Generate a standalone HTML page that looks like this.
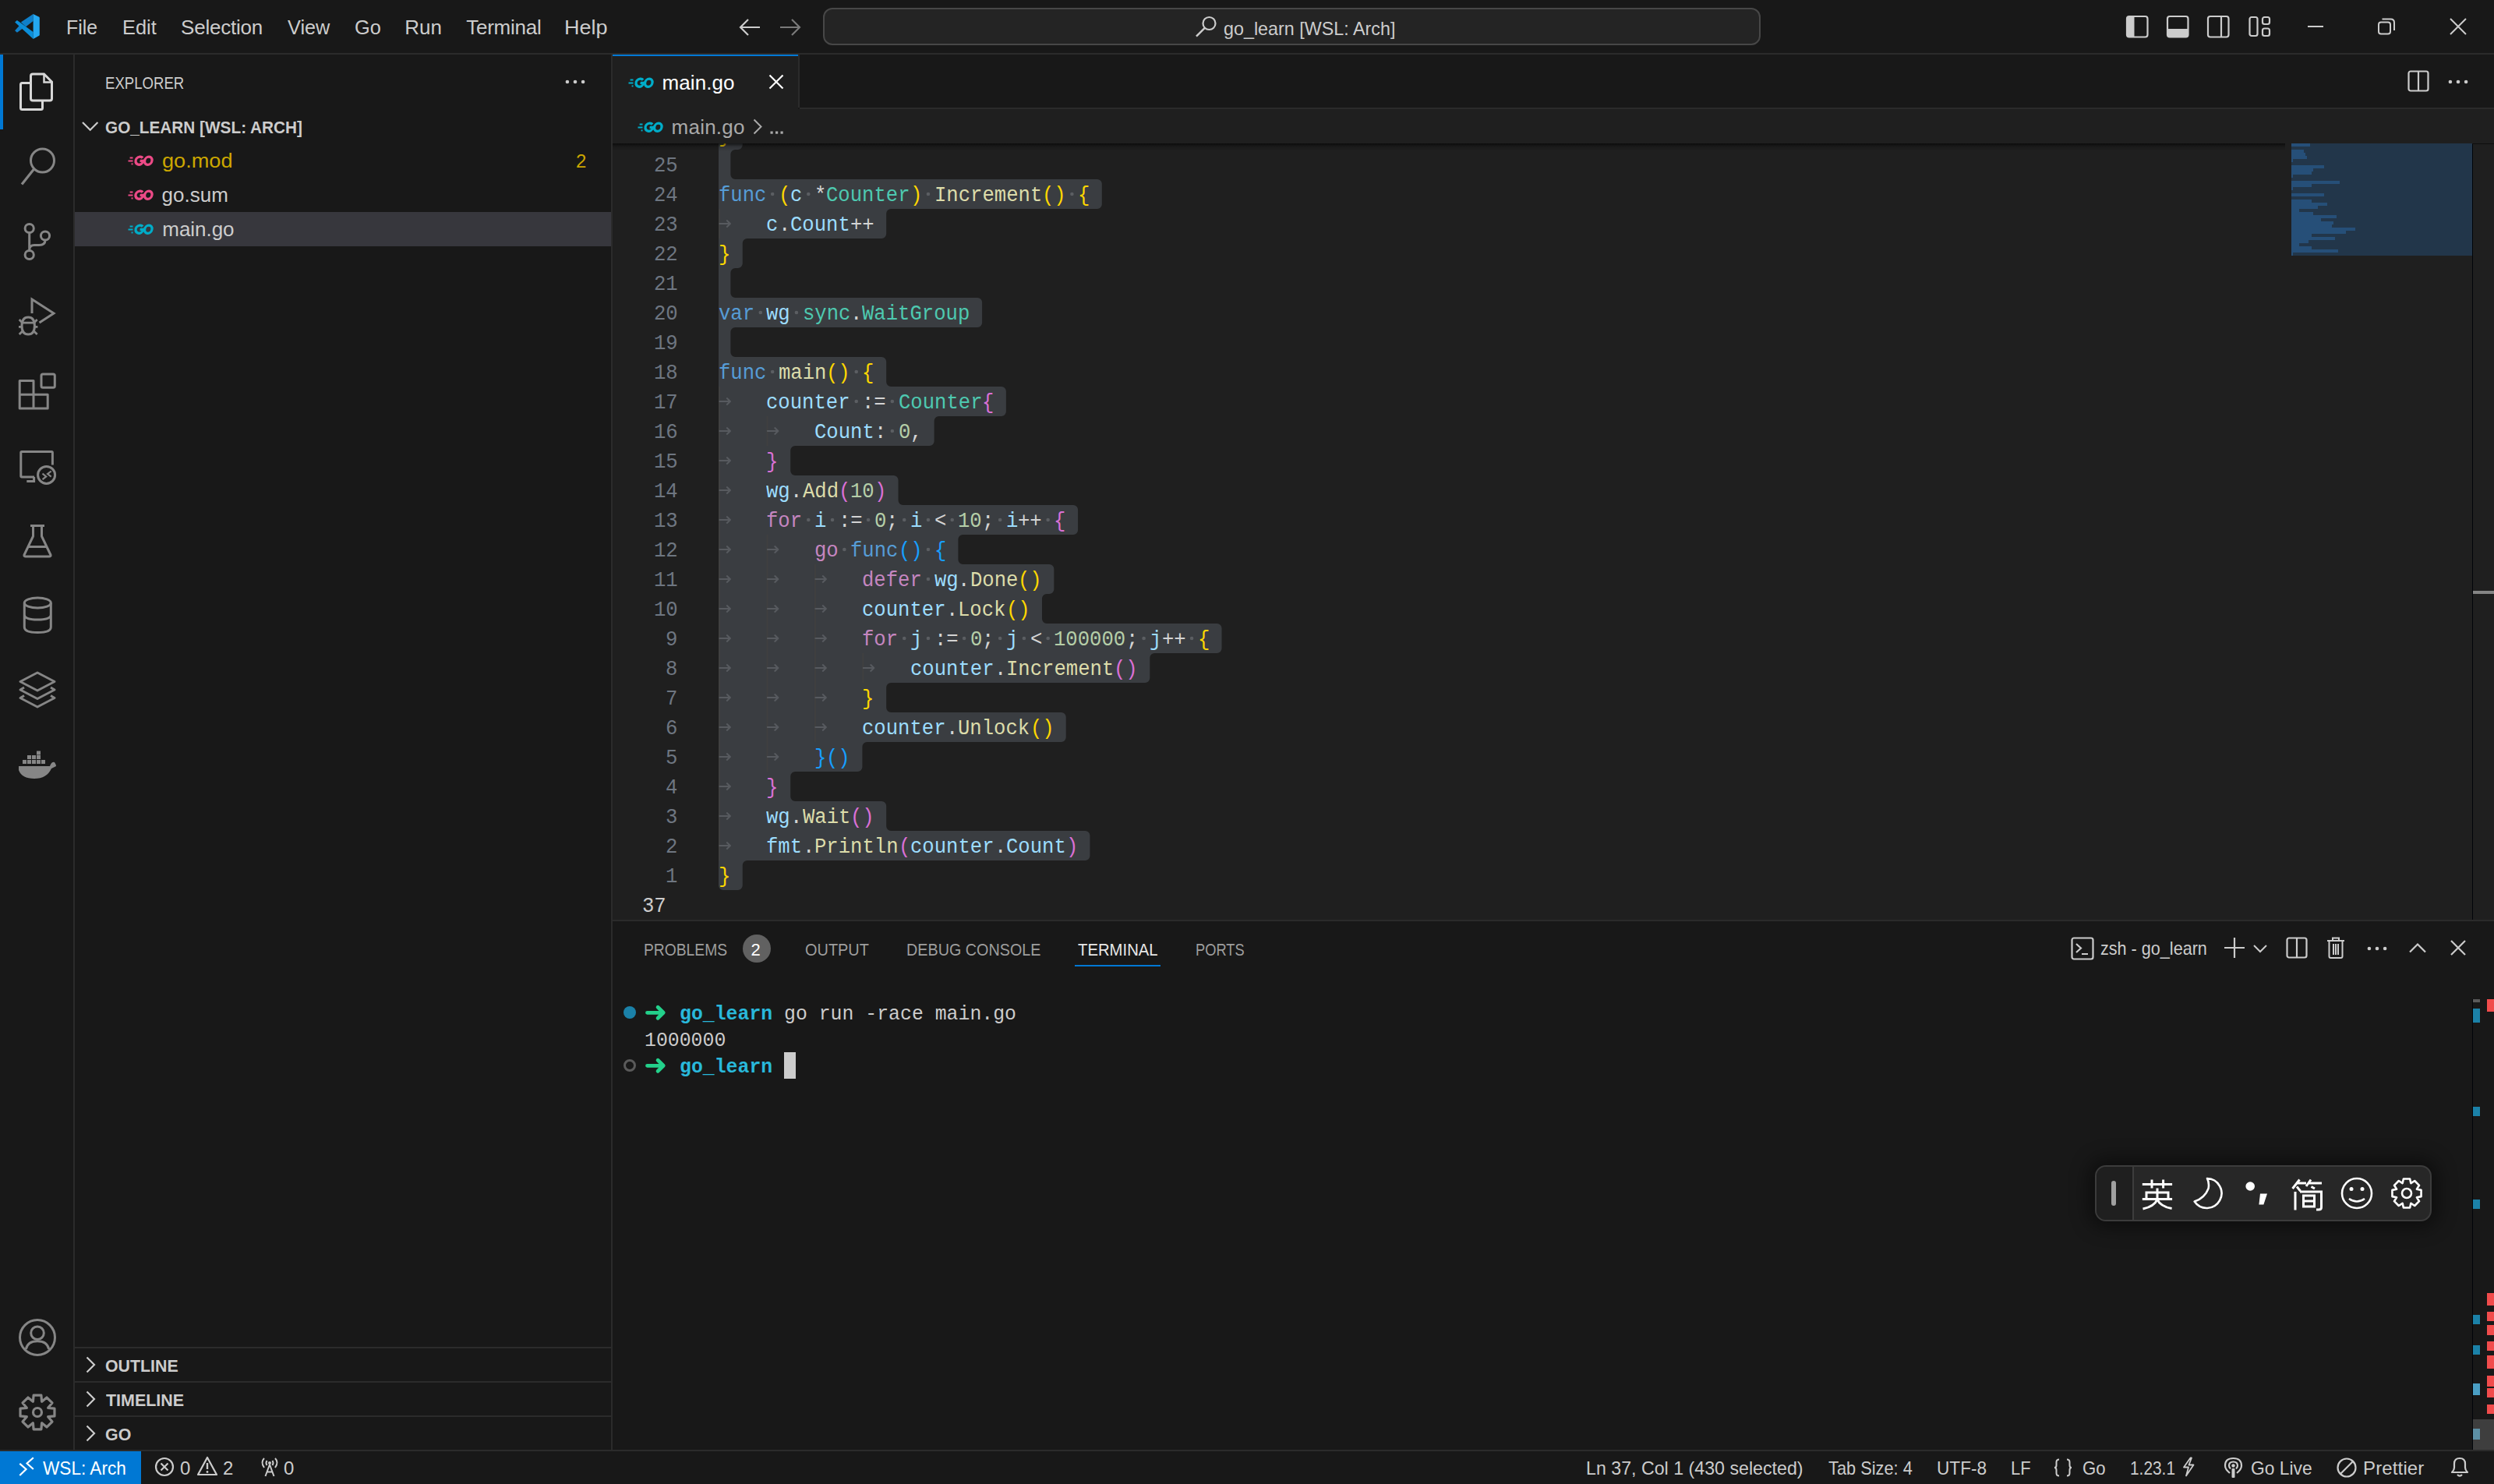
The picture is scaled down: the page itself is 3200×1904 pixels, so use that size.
<!DOCTYPE html>
<html><head><meta charset="utf-8"><title>VS Code</title>
<style>
html,body{margin:0;padding:0;}
body{width:3200px;height:1904px;overflow:hidden;position:relative;background:#181818;font-family:'Liberation Sans',sans-serif;}
.r{position:absolute;}
.s{position:absolute;overflow:hidden;}
.t{position:absolute;white-space:pre;}
.c{position:absolute;white-space:pre;font-family:'Liberation Mono',monospace;font-size:27px;line-height:27px;transform:scaleX(0.9488);transform-origin:0 0;}
</style></head><body>
<div class="r" style="left:0px;top:0px;width:3200px;height:68px;background:#181818;"></div><div class="r" style="left:0px;top:68px;width:3200px;height:2px;background:#2b2b2b;"></div><svg class="s" style="left:14px;top:12px;" width="42" height="42" viewBox="14 12 42 42" fill="none">
<path d="M42.6 17.9 L42.6 27 L33.2 34.2 L26.8 28.6 Z" fill="#0f7fc9"/>
<path d="M19.1 39.2 L21.9 41.8 L29.2 36.4 L25.2 32.5 Z" fill="#0f7fc9"/>
<path d="M19.1 28.6 L21.9 26.1 L42.6 41 L42.6 49.9 Z" fill="#0b8ed9"/>
<path d="M42.6 17.9 L50.2 21.8 Q50.8 22.3 50.8 23.2 V44.5 Q50.8 45.3 50.2 45.7 L42.6 49.9 Z" fill="#24a8f2"/>
</svg><svg class="s" style="left:946px;top:20px;" width="32" height="30" viewBox="0 0 32 30" fill="none"><path d="M4 15 H29 M14 5 L4 15 L14 25" stroke="#cccccc" stroke-width="2.2"/></svg><svg class="s" style="left:998px;top:20px;" width="32" height="30" viewBox="0 0 32 30" fill="none"><path d="M3 15 H28 M18 5 L28 15 L18 25" stroke="#7a7a7a" stroke-width="2.2"/></svg><div class="r" style="left:1056px;top:10px;width:1203px;height:48px;background:#242424;border:2px solid #474747;box-sizing:border-box;border-radius:12px;"></div><svg class="s" style="left:1532px;top:18px;" width="32" height="32" viewBox="0 0 32 32" fill="none"><circle cx="19.5" cy="12" r="8" stroke="#cccccc" stroke-width="2.2"/><path d="M13.8 17.8 L3 28.6" stroke="#cccccc" stroke-width="2.4"/></svg><svg class="s" style="left:2726px;top:18px;" width="32" height="32" viewBox="0 0 32 32" fill="none"><rect x="3" y="3" width="26.5" height="26.5" rx="3" stroke="#cccccc" stroke-width="2.2"/><path d="M3 6 Q3 3 6 3 H12.5 V29.5 H6 Q3 29.5 3 26.5 Z" fill="#cccccc"/></svg><svg class="s" style="left:2778px;top:18px;" width="32" height="32" viewBox="0 0 32 32" fill="none"><rect x="3" y="3" width="26.5" height="26.5" rx="3" stroke="#cccccc" stroke-width="2.2"/><path d="M3 19 H29.5 V26.5 Q29.5 29.5 26.5 29.5 H6 Q3 29.5 3 26.5 Z" fill="#cccccc"/></svg><svg class="s" style="left:2830px;top:18px;" width="32" height="32" viewBox="0 0 32 32" fill="none"><rect x="3" y="3" width="26.5" height="26.5" rx="3" stroke="#cccccc" stroke-width="2.2"/><path d="M20 3 V29.5" stroke="#cccccc" stroke-width="2.2"/></svg><svg class="s" style="left:2884px;top:18px;" width="32" height="32" viewBox="0 0 32 32" fill="none"><rect x="2.5" y="4" width="10" height="24" rx="2.5" stroke="#cccccc" stroke-width="2.2"/><rect x="19" y="4" width="9" height="9" rx="2.5" stroke="#cccccc" stroke-width="2.2"/><rect x="19" y="18.5" width="9" height="9.5" rx="2.5" stroke="#cccccc" stroke-width="2.2"/></svg><div class="r" style="left:2961px;top:33px;width:20px;height:2px;background:#cccccc;"></div><svg class="s" style="left:3048px;top:20px;" width="28" height="28" viewBox="0 0 28 28" fill="none"><rect x="4" y="8.5" width="15" height="15" rx="3" stroke="#cccccc" stroke-width="2"/><path d="M8.5 4.5 H19.5 Q24 4.5 24 9 V19" stroke="#cccccc" stroke-width="2"/></svg><svg class="s" style="left:3140px;top:20px;" width="28" height="28" viewBox="0 0 28 28" fill="none"><path d="M4 4 L24 24 M24 4 L4 24" stroke="#cccccc" stroke-width="2"/></svg><div class="r" style="left:0px;top:70px;width:94px;height:1790px;background:#181818;"></div><div class="r" style="left:94px;top:70px;width:2px;height:1790px;background:#2b2b2b;"></div><div class="r" style="left:0px;top:70px;width:4px;height:96px;background:#0078d4;"></div><svg class="s" style="left:0px;top:70px;" width="94" height="96" viewBox="0 70 94 96" fill="none"><path d="M39.5 106.5 H28.5 Q26.5 106.5 26.5 108.5 V138.5 Q26.5 140.5 28.5 140.5 H52.5 Q54.5 140.5 54.5 138.5 V129.5" stroke="#d7d7d7" stroke-width="3"/>
<path d="M42 95 H56.5 L66.5 105 V126.5 Q66.5 129 64 129 H42 Q39.5 129 39.5 126.5 V97.5 Q39.5 95 42 95 Z" stroke="#d7d7d7" stroke-width="3"/>
<path d="M56.5 96 V105.5 H66" stroke="#d7d7d7" stroke-width="2.5"/></svg><svg class="s" style="left:0px;top:166px;" width="94" height="96" viewBox="0 166 94 96" fill="none"><circle cx="54.5" cy="206" r="15" stroke="#868686" stroke-width="3"/><path d="M43.5 217 L28 236.5" stroke="#868686" stroke-width="3.2"/></svg><svg class="s" style="left:0px;top:262px;" width="94" height="96" viewBox="0 262 94 96" fill="none"><circle cx="37.7" cy="293" r="5.6" stroke="#868686" stroke-width="3"/>
<circle cx="37.7" cy="327" r="5.6" stroke="#868686" stroke-width="3"/>
<circle cx="58" cy="302.5" r="5.6" stroke="#868686" stroke-width="3"/>
<path d="M37.7 298.6 V321.4 M58 308 Q58 314.5 50 314.5 H44 Q37.7 314.5 37.7 321" stroke="#868686" stroke-width="3"/></svg><svg class="s" style="left:0px;top:358px;" width="94" height="96" viewBox="0 358 94 96" fill="none"><path d="M41 402 V384 L69 402 L50.5 414" stroke="#868686" stroke-width="3" stroke-linejoin="miter"/>
<path d="M28 418 Q28 407 36.2 407 Q44.4 407 44.4 418 Q44.4 429 36.2 429 Q28 429 28 418 Z" stroke="#868686" stroke-width="3"/>
<path d="M28.5 414.2 H44 M24.7 410.1 L28.8 414.2 M47.7 410.1 L43.6 414.2 M24.7 429 L28.8 425 M47.7 429 L43.6 425 M24 419.3 H28 M44.4 419.3 H48.4" stroke="#868686" stroke-width="2.8"/></svg><svg class="s" style="left:0px;top:454px;" width="94" height="96" viewBox="0 454 94 96" fill="none"><path d="M25.2 488.5 H43 V524 H25.2 Z M25.2 506.2 H61.2 V524 H43" stroke="#868686" stroke-width="3" stroke-linejoin="round"/>
<rect x="53" y="480" width="17.3" height="17.3" rx="2" stroke="#868686" stroke-width="3"/></svg><svg class="s" style="left:0px;top:550px;" width="94" height="96" viewBox="0 550 94 96" fill="none"><path d="M44 612 H28 Q26.8 612 26.8 610.8 V580.8 Q26.8 579.6 28 579.6 H66.2 Q67.4 579.6 67.4 580.8 V596.5" stroke="#868686" stroke-width="3"/>
<path d="M34.3 617.4 H43.6 V612" stroke="#868686" stroke-width="3"/>
<circle cx="59.6" cy="609.4" r="11" stroke="#868686" stroke-width="3"/>
<path d="M54.5 607.7 L59.2 611.4 L54.5 615.1 M65.7 604.5 L61 608.1 L65.7 611.7" stroke="#868686" stroke-width="2.2"/></svg><svg class="s" style="left:0px;top:646px;" width="94" height="96" viewBox="0 646 94 96" fill="none"><path d="M39 674.5 H57 M42.5 674.5 V688 L31 712 Q30.5 714 33 714 H63 Q65.5 714 65 712 L53.5 688 V674.5 M35 701.5 H61" stroke="#868686" stroke-width="3" stroke-linejoin="round"/></svg><svg class="s" style="left:0px;top:742px;" width="94" height="96" viewBox="0 742 94 96" fill="none"><ellipse cx="48.3" cy="773.5" rx="17" ry="6.5" stroke="#868686" stroke-width="3"/>
<path d="M31.3 773.5 V804.5 Q31.3 811.5 48.3 811.5 Q65.3 811.5 65.3 804.5 V773.5 M31.3 788.5 Q31.3 795 48.3 795 Q65.3 795 65.3 788.5" stroke="#868686" stroke-width="3"/></svg><svg class="s" style="left:0px;top:838px;" width="94" height="96" viewBox="0 838 94 96" fill="none"><path d="M48 863 L70 874.5 L48 886 L26 874.5 Z" stroke="#868686" stroke-width="3" stroke-linejoin="round"/>
<path d="M31 882 L26 885 L48 896.5 L70 885 L65 882" stroke="#868686" stroke-width="3" stroke-linejoin="round"/>
<path d="M31 892.5 L26 895.5 L48 907 L70 895.5 L65 892.5" stroke="#868686" stroke-width="3" stroke-linejoin="round"/></svg><svg class="s" style="left:0px;top:934px;" width="94" height="96" viewBox="0 934 94 96" fill="none"><path d="M24 983 H64 Q66 977 70 978 Q72 981 72 983 Q68 985 66 986 Q60 999 44 999 Q28 999 24 988 Z" fill="#868686"/>
<rect x="29" y="975" width="5" height="5" fill="#868686"/><rect x="35" y="975" width="5" height="5" fill="#868686"/><rect x="41" y="975" width="5" height="5" fill="#868686"/><rect x="47" y="975" width="5" height="5" fill="#868686"/><rect x="53" y="975" width="5" height="5" fill="#868686"/>
<rect x="35" y="969" width="5" height="5" fill="#868686"/><rect x="41" y="969" width="5" height="5" fill="#868686"/><rect x="47" y="969" width="5" height="5" fill="#868686"/>
<rect x="47" y="963.5" width="5" height="5" fill="#868686"/></svg><svg class="s" style="left:0px;top:1668px;" width="94" height="96" viewBox="0 1668 94 96" fill="none"><circle cx="48" cy="1716" r="22.5" stroke="#868686" stroke-width="3"/>
<circle cx="48" cy="1710.3" r="8.3" stroke="#868686" stroke-width="3"/>
<path d="M33.3 1731 Q35.5 1720.8 48 1720.8 Q60.5 1720.8 62.7 1731" stroke="#868686" stroke-width="3"/></svg><svg class="s" style="left:0px;top:1764px;" width="94" height="96" viewBox="0 1764 94 96" fill="none"><path d="M61.69 1806.38 L69.96 1807.11 L69.96 1816.89 L61.69 1817.62 L61.66 1817.71 L66.99 1824.07 L60.07 1830.99 L53.71 1825.66 L53.62 1825.69 L52.89 1833.96 L43.11 1833.96 L42.38 1825.69 L42.29 1825.66 L35.93 1830.99 L29.01 1824.07 L34.34 1817.71 L34.31 1817.62 L26.04 1816.89 L26.04 1807.11 L34.31 1806.38 L34.34 1806.29 L29.01 1799.93 L35.93 1793.01 L42.29 1798.34 L42.38 1798.31 L43.11 1790.04 L52.89 1790.04 L53.62 1798.31 L53.71 1798.34 L60.07 1793.01 L66.99 1799.93 L61.66 1806.29Z" stroke="#868686" stroke-width="3.2" stroke-linejoin="round" fill="none"/><circle cx="48" cy="1812" r="5.5" stroke="#868686" stroke-width="3.2" fill="none"/></svg><div class="r" style="left:96px;top:70px;width:688px;height:1790px;background:#181818;"></div><div class="r" style="left:784px;top:70px;width:2px;height:1790px;background:#2b2b2b;"></div><svg class="s" style="left:700px;top:90px;" width="60" height="30" viewBox="700 90 60 30" fill="none"><circle cx="727.9" cy="105" r="2.3" fill="#cccccc"/><circle cx="738.0" cy="105" r="2.3" fill="#cccccc"/><circle cx="748.1" cy="105" r="2.3" fill="#cccccc"/></svg><svg class="s" style="left:96px;top:140px;" width="40" height="44" viewBox="96 140 40 44" fill="none"><path d="M106 157 L115.7 166.7 L125.4 157" stroke="#cccccc" stroke-width="2.2"/></svg><svg class="s" style="left:163.5px;top:199px;" width="36" height="16" viewBox="0 0 36 16" fill="none"><rect x="2.6" y="2.5" width="3.9" height="2" fill="#ec4a86"/>
<rect x="0.5" y="6.5" width="6" height="2" fill="#ec4a86"/>
<rect x="4.6" y="10.4" width="1.9" height="2" fill="#ec4a86"/>
<g transform="translate(0 7.2) skewX(-8) translate(0 -7.2)">
<path d="M18.6 3.6 A5 5.1 0 1 0 20 7.4 H15.6" stroke="#ec4a86" stroke-width="3.3" fill="none"/>
<ellipse cx="26.3" cy="7.2" rx="4.7" ry="5.1" stroke="#ec4a86" stroke-width="3.3" fill="none"/></g></svg><svg class="s" style="left:163.5px;top:243px;" width="36" height="16" viewBox="0 0 36 16" fill="none"><rect x="2.6" y="2.5" width="3.9" height="2" fill="#ec4a86"/>
<rect x="0.5" y="6.5" width="6" height="2" fill="#ec4a86"/>
<rect x="4.6" y="10.4" width="1.9" height="2" fill="#ec4a86"/>
<g transform="translate(0 7.2) skewX(-8) translate(0 -7.2)">
<path d="M18.6 3.6 A5 5.1 0 1 0 20 7.4 H15.6" stroke="#ec4a86" stroke-width="3.3" fill="none"/>
<ellipse cx="26.3" cy="7.2" rx="4.7" ry="5.1" stroke="#ec4a86" stroke-width="3.3" fill="none"/></g></svg><div class="r" style="left:96px;top:272px;width:688px;height:44px;background:#37373d;"></div><svg class="s" style="left:163.5px;top:287px;" width="36" height="16" viewBox="0 0 36 16" fill="none"><rect x="2.6" y="2.5" width="3.9" height="2" fill="#00acc8"/>
<rect x="0.5" y="6.5" width="6" height="2" fill="#00acc8"/>
<rect x="4.6" y="10.4" width="1.9" height="2" fill="#00acc8"/>
<g transform="translate(0 7.2) skewX(-8) translate(0 -7.2)">
<path d="M18.6 3.6 A5 5.1 0 1 0 20 7.4 H15.6" stroke="#00acc8" stroke-width="3.3" fill="none"/>
<ellipse cx="26.3" cy="7.2" rx="4.7" ry="5.1" stroke="#00acc8" stroke-width="3.3" fill="none"/></g></svg><div class="r" style="left:96px;top:1728px;width:688px;height:2px;background:#2b2b2b;"></div><svg class="s" style="left:100px;top:1728px;" width="30" height="44" viewBox="100 1728 30 44" fill="none"><path d="M111.5 1741.5 L121 1751 L111.5 1760.5" stroke="#cccccc" stroke-width="2.2"/></svg><div class="r" style="left:96px;top:1772px;width:688px;height:2px;background:#2b2b2b;"></div><svg class="s" style="left:100px;top:1772px;" width="30" height="44" viewBox="100 1772 30 44" fill="none"><path d="M111.5 1785.5 L121 1795 L111.5 1804.5" stroke="#cccccc" stroke-width="2.2"/></svg><div class="r" style="left:96px;top:1816px;width:688px;height:2px;background:#2b2b2b;"></div><svg class="s" style="left:100px;top:1816px;" width="30" height="44" viewBox="100 1816 30 44" fill="none"><path d="M111.5 1829.5 L121 1839 L111.5 1848.5" stroke="#cccccc" stroke-width="2.2"/></svg><div class="r" style="left:786px;top:70px;width:2414px;height:68px;background:#181818;"></div><div class="r" style="left:1026px;top:138px;width:2174px;height:2px;background:#2b2b2b;"></div><div class="r" style="left:786px;top:70px;width:238px;height:70px;background:#1f1f1f;"></div><div class="r" style="left:786px;top:70px;width:238px;height:2px;background:#0078d4;"></div><div class="r" style="left:1024px;top:70px;width:2px;height:68px;background:#2b2b2b;"></div><svg class="s" style="left:805.7px;top:98.5px;" width="36" height="16" viewBox="0 0 36 16" fill="none"><rect x="2.6" y="2.5" width="3.9" height="2" fill="#00acc8"/>
<rect x="0.5" y="6.5" width="6" height="2" fill="#00acc8"/>
<rect x="4.6" y="10.4" width="1.9" height="2" fill="#00acc8"/>
<g transform="translate(0 7.2) skewX(-8) translate(0 -7.2)">
<path d="M18.6 3.6 A5 5.1 0 1 0 20 7.4 H15.6" stroke="#00acc8" stroke-width="3.3" fill="none"/>
<ellipse cx="26.3" cy="7.2" rx="4.7" ry="5.1" stroke="#00acc8" stroke-width="3.3" fill="none"/></g></svg><svg class="s" style="left:980px;top:89px;" width="32" height="32" viewBox="0 0 32 32" fill="none"><path d="M7.5 7.5 L24.5 24.5 M24.5 7.5 L7.5 24.5" stroke="#ffffff" stroke-width="2.2"/></svg><svg class="s" style="left:3087px;top:88px;" width="32" height="32" viewBox="0 0 32 32" fill="none"><rect x="3.5" y="3.5" width="25" height="25" rx="2.5" stroke="#cccccc" stroke-width="2.2"/><path d="M16 3.5 V28.5" stroke="#cccccc" stroke-width="2.2"/></svg><svg class="s" style="left:3130px;top:90px;" width="50" height="30" viewBox="3130 90 50 30" fill="none"><circle cx="3143.9" cy="105" r="2.3" fill="#cccccc"/><circle cx="3154.0" cy="105" r="2.3" fill="#cccccc"/><circle cx="3164.1" cy="105" r="2.3" fill="#cccccc"/></svg><div class="r" style="left:786px;top:140px;width:2414px;height:44px;background:#1f1f1f;"></div><svg class="s" style="left:817.7px;top:155.5px;" width="36" height="16" viewBox="0 0 36 16" fill="none"><rect x="2.6" y="2.5" width="3.9" height="2" fill="#00acc8"/>
<rect x="0.5" y="6.5" width="6" height="2" fill="#00acc8"/>
<rect x="4.6" y="10.4" width="1.9" height="2" fill="#00acc8"/>
<g transform="translate(0 7.2) skewX(-8) translate(0 -7.2)">
<path d="M18.6 3.6 A5 5.1 0 1 0 20 7.4 H15.6" stroke="#00acc8" stroke-width="3.3" fill="none"/>
<ellipse cx="26.3" cy="7.2" rx="4.7" ry="5.1" stroke="#00acc8" stroke-width="3.3" fill="none"/></g></svg><svg class="s" style="left:960px;top:148px;" width="24" height="30" viewBox="960 148 24 30" fill="none"><path d="M967.5 153.5 L976.5 162.5 L967.5 171.5" stroke="#a9a9a9" stroke-width="2"/></svg><svg class="s" style="left:984px;top:160px;" width="26" height="20" viewBox="984 160 26 20" fill="none"><rect x="988.5" y="168.5" width="3.2" height="3.2" fill="#a9a9a9"/><rect x="995.0" y="168.5" width="3.2" height="3.2" fill="#a9a9a9"/><rect x="1001.5" y="168.5" width="3.2" height="3.2" fill="#a9a9a9"/></svg><div class="r" style="left:786px;top:184px;width:2414px;height:996px;background:#1f1f1f;"></div><svg class="s" style="left:786px;top:184px" width="2386" height="996" viewBox="786 184 2386 996"><path d="M922.00 160.00A6 6 0 0 1 928.00 154.00L946.74 154.00A6 6 0 0 1 952.74 160.00L952.74 186.00A6 6 0 0 1 946.74 192.00L943.37 192.00A6 6 0 0 0 937.37 198.00L937.37 224.00A6 6 0 0 0 943.37 230.00L1407.84 230.00A6 6 0 0 1 1413.84 236.00L1413.84 262.00A6 6 0 0 1 1407.84 268.00L1143.18 268.00A6 6 0 0 0 1137.18 274.00L1137.18 300.00A6 6 0 0 1 1131.18 306.00L958.74 306.00A6 6 0 0 0 952.74 312.00L952.74 338.00A6 6 0 0 1 946.74 344.00L943.37 344.00A6 6 0 0 0 937.37 350.00L937.37 376.00A6 6 0 0 0 943.37 382.00L1254.14 382.00A6 6 0 0 1 1260.14 388.00L1260.14 414.00A6 6 0 0 1 1254.14 420.00L943.37 420.00A6 6 0 0 0 937.37 426.00L937.37 452.00A6 6 0 0 0 943.37 458.00L1131.18 458.00A6 6 0 0 1 1137.18 464.00L1137.18 490.00A6 6 0 0 0 1143.18 496.00L1284.88 496.00A6 6 0 0 1 1290.88 502.00L1290.88 528.00A6 6 0 0 1 1284.88 534.00L1204.66 534.00A6 6 0 0 0 1198.66 540.00L1198.66 566.00A6 6 0 0 1 1192.66 572.00L1020.22 572.00A6 6 0 0 0 1014.22 578.00L1014.22 604.00A6 6 0 0 0 1020.22 610.00L1146.55 610.00A6 6 0 0 1 1152.55 616.00L1152.55 642.00A6 6 0 0 0 1158.55 648.00L1377.10 648.00A6 6 0 0 1 1383.10 654.00L1383.10 680.00A6 6 0 0 1 1377.10 686.00L1235.40 686.00A6 6 0 0 0 1229.40 692.00L1229.40 718.00A6 6 0 0 0 1235.40 724.00L1346.36 724.00A6 6 0 0 1 1352.36 730.00L1352.36 756.00A6 6 0 0 1 1346.36 762.00L1342.99 762.00A6 6 0 0 0 1336.99 768.00L1336.99 794.00A6 6 0 0 0 1342.99 800.00L1561.54 800.00A6 6 0 0 1 1567.54 806.00L1567.54 832.00A6 6 0 0 1 1561.54 838.00L1481.32 838.00A6 6 0 0 0 1475.32 844.00L1475.32 870.00A6 6 0 0 1 1469.32 876.00L1143.18 876.00A6 6 0 0 0 1137.18 882.00L1137.18 908.00A6 6 0 0 0 1143.18 914.00L1361.73 914.00A6 6 0 0 1 1367.73 920.00L1367.73 946.00A6 6 0 0 1 1361.73 952.00L1112.44 952.00A6 6 0 0 0 1106.44 958.00L1106.44 984.00A6 6 0 0 1 1100.44 990.00L1020.22 990.00A6 6 0 0 0 1014.22 996.00L1014.22 1022.00A6 6 0 0 0 1020.22 1028.00L1131.18 1028.00A6 6 0 0 1 1137.18 1034.00L1137.18 1060.00A6 6 0 0 0 1143.18 1066.00L1392.47 1066.00A6 6 0 0 1 1398.47 1072.00L1398.47 1098.00A6 6 0 0 1 1392.47 1104.00L958.74 1104.00A6 6 0 0 0 952.74 1110.00L952.74 1136.00A6 6 0 0 1 946.74 1142.00L928.00 1142.00A6 6 0 0 1 922.00 1136.00Z" fill="#3a3d41"/><rect x="922.00" y="268" width="2" height="38" fill="#404040"/><rect x="922.00" y="496" width="2" height="38" fill="#404040"/><rect x="922.00" y="534" width="2" height="38" fill="#404040"/><rect x="983.48" y="534" width="2" height="38" fill="#404040"/><rect x="922.00" y="572" width="2" height="38" fill="#404040"/><rect x="922.00" y="610" width="2" height="38" fill="#404040"/><rect x="922.00" y="648" width="2" height="38" fill="#404040"/><rect x="922.00" y="686" width="2" height="38" fill="#404040"/><rect x="983.48" y="686" width="2" height="38" fill="#404040"/><rect x="922.00" y="724" width="2" height="38" fill="#404040"/><rect x="983.48" y="724" width="2" height="38" fill="#404040"/><rect x="1044.96" y="724" width="2" height="38" fill="#404040"/><rect x="922.00" y="762" width="2" height="38" fill="#404040"/><rect x="983.48" y="762" width="2" height="38" fill="#404040"/><rect x="1044.96" y="762" width="2" height="38" fill="#404040"/><rect x="922.00" y="800" width="2" height="38" fill="#404040"/><rect x="983.48" y="800" width="2" height="38" fill="#404040"/><rect x="1044.96" y="800" width="2" height="38" fill="#404040"/><rect x="922.00" y="838" width="2" height="38" fill="#404040"/><rect x="983.48" y="838" width="2" height="38" fill="#404040"/><rect x="1044.96" y="838" width="2" height="38" fill="#404040"/><rect x="1106.44" y="838" width="2" height="38" fill="#404040"/><rect x="922.00" y="876" width="2" height="38" fill="#404040"/><rect x="983.48" y="876" width="2" height="38" fill="#404040"/><rect x="1044.96" y="876" width="2" height="38" fill="#404040"/><rect x="922.00" y="914" width="2" height="38" fill="#404040"/><rect x="983.48" y="914" width="2" height="38" fill="#404040"/><rect x="1044.96" y="914" width="2" height="38" fill="#404040"/><rect x="922.00" y="952" width="2" height="38" fill="#404040"/><rect x="983.48" y="952" width="2" height="38" fill="#404040"/><rect x="922.00" y="990" width="2" height="38" fill="#404040"/><rect x="922.00" y="1028" width="2" height="38" fill="#404040"/><rect x="922.00" y="1066" width="2" height="38" fill="#404040"/><circle cx="991.16" cy="249" r="2.3" fill="#5b5e62"/><circle cx="1037.27" cy="249" r="2.3" fill="#5b5e62"/><circle cx="1190.97" cy="249" r="2.3" fill="#5b5e62"/><circle cx="1375.41" cy="249" r="2.3" fill="#5b5e62"/><path d="M923.40 287 H936.40 M932.80 283.1 L936.90 287 L932.80 290.9" stroke="#575a5f" stroke-width="2.1" stroke-linecap="round" stroke-linejoin="round" fill="none"/><circle cx="975.79" cy="401" r="2.3" fill="#5b5e62"/><circle cx="1021.90" cy="401" r="2.3" fill="#5b5e62"/><circle cx="991.16" cy="477" r="2.3" fill="#5b5e62"/><circle cx="1098.75" cy="477" r="2.3" fill="#5b5e62"/><path d="M923.40 515 H936.40 M932.80 511.1 L936.90 515 L932.80 518.9" stroke="#575a5f" stroke-width="2.1" stroke-linecap="round" stroke-linejoin="round" fill="none"/><circle cx="1098.75" cy="515" r="2.3" fill="#5b5e62"/><circle cx="1144.87" cy="515" r="2.3" fill="#5b5e62"/><path d="M923.40 553 H936.40 M932.80 549.1 L936.90 553 L932.80 556.9" stroke="#575a5f" stroke-width="2.1" stroke-linecap="round" stroke-linejoin="round" fill="none"/><path d="M984.88 553 H997.88 M994.28 549.1 L998.38 553 L994.28 556.9" stroke="#575a5f" stroke-width="2.1" stroke-linecap="round" stroke-linejoin="round" fill="none"/><circle cx="1144.87" cy="553" r="2.3" fill="#5b5e62"/><path d="M923.40 591 H936.40 M932.80 587.1 L936.90 591 L932.80 594.9" stroke="#575a5f" stroke-width="2.1" stroke-linecap="round" stroke-linejoin="round" fill="none"/><path d="M923.40 629 H936.40 M932.80 625.1 L936.90 629 L932.80 632.9" stroke="#575a5f" stroke-width="2.1" stroke-linecap="round" stroke-linejoin="round" fill="none"/><path d="M923.40 667 H936.40 M932.80 663.1 L936.90 667 L932.80 670.9" stroke="#575a5f" stroke-width="2.1" stroke-linecap="round" stroke-linejoin="round" fill="none"/><circle cx="1037.27" cy="667" r="2.3" fill="#5b5e62"/><circle cx="1068.01" cy="667" r="2.3" fill="#5b5e62"/><circle cx="1114.12" cy="667" r="2.3" fill="#5b5e62"/><circle cx="1160.23" cy="667" r="2.3" fill="#5b5e62"/><circle cx="1190.97" cy="667" r="2.3" fill="#5b5e62"/><circle cx="1221.71" cy="667" r="2.3" fill="#5b5e62"/><circle cx="1283.19" cy="667" r="2.3" fill="#5b5e62"/><circle cx="1344.67" cy="667" r="2.3" fill="#5b5e62"/><path d="M923.40 705 H936.40 M932.80 701.1 L936.90 705 L932.80 708.9" stroke="#575a5f" stroke-width="2.1" stroke-linecap="round" stroke-linejoin="round" fill="none"/><path d="M984.88 705 H997.88 M994.28 701.1 L998.38 705 L994.28 708.9" stroke="#575a5f" stroke-width="2.1" stroke-linecap="round" stroke-linejoin="round" fill="none"/><circle cx="1083.38" cy="705" r="2.3" fill="#5b5e62"/><circle cx="1190.97" cy="705" r="2.3" fill="#5b5e62"/><path d="M923.40 743 H936.40 M932.80 739.1 L936.90 743 L932.80 746.9" stroke="#575a5f" stroke-width="2.1" stroke-linecap="round" stroke-linejoin="round" fill="none"/><path d="M984.88 743 H997.88 M994.28 739.1 L998.38 743 L994.28 746.9" stroke="#575a5f" stroke-width="2.1" stroke-linecap="round" stroke-linejoin="round" fill="none"/><path d="M1046.36 743 H1059.36 M1055.76 739.1 L1059.86 743 L1055.76 746.9" stroke="#575a5f" stroke-width="2.1" stroke-linecap="round" stroke-linejoin="round" fill="none"/><circle cx="1190.97" cy="743" r="2.3" fill="#5b5e62"/><path d="M923.40 781 H936.40 M932.80 777.1 L936.90 781 L932.80 784.9" stroke="#575a5f" stroke-width="2.1" stroke-linecap="round" stroke-linejoin="round" fill="none"/><path d="M984.88 781 H997.88 M994.28 777.1 L998.38 781 L994.28 784.9" stroke="#575a5f" stroke-width="2.1" stroke-linecap="round" stroke-linejoin="round" fill="none"/><path d="M1046.36 781 H1059.36 M1055.76 777.1 L1059.86 781 L1055.76 784.9" stroke="#575a5f" stroke-width="2.1" stroke-linecap="round" stroke-linejoin="round" fill="none"/><path d="M923.40 819 H936.40 M932.80 815.1 L936.90 819 L932.80 822.9" stroke="#575a5f" stroke-width="2.1" stroke-linecap="round" stroke-linejoin="round" fill="none"/><path d="M984.88 819 H997.88 M994.28 815.1 L998.38 819 L994.28 822.9" stroke="#575a5f" stroke-width="2.1" stroke-linecap="round" stroke-linejoin="round" fill="none"/><path d="M1046.36 819 H1059.36 M1055.76 815.1 L1059.86 819 L1055.76 822.9" stroke="#575a5f" stroke-width="2.1" stroke-linecap="round" stroke-linejoin="round" fill="none"/><circle cx="1160.23" cy="819" r="2.3" fill="#5b5e62"/><circle cx="1190.97" cy="819" r="2.3" fill="#5b5e62"/><circle cx="1237.09" cy="819" r="2.3" fill="#5b5e62"/><circle cx="1283.19" cy="819" r="2.3" fill="#5b5e62"/><circle cx="1313.93" cy="819" r="2.3" fill="#5b5e62"/><circle cx="1344.67" cy="819" r="2.3" fill="#5b5e62"/><circle cx="1467.63" cy="819" r="2.3" fill="#5b5e62"/><circle cx="1529.11" cy="819" r="2.3" fill="#5b5e62"/><path d="M923.40 857 H936.40 M932.80 853.1 L936.90 857 L932.80 860.9" stroke="#575a5f" stroke-width="2.1" stroke-linecap="round" stroke-linejoin="round" fill="none"/><path d="M984.88 857 H997.88 M994.28 853.1 L998.38 857 L994.28 860.9" stroke="#575a5f" stroke-width="2.1" stroke-linecap="round" stroke-linejoin="round" fill="none"/><path d="M1046.36 857 H1059.36 M1055.76 853.1 L1059.86 857 L1055.76 860.9" stroke="#575a5f" stroke-width="2.1" stroke-linecap="round" stroke-linejoin="round" fill="none"/><path d="M1107.84 857 H1120.84 M1117.24 853.1 L1121.34 857 L1117.24 860.9" stroke="#575a5f" stroke-width="2.1" stroke-linecap="round" stroke-linejoin="round" fill="none"/><path d="M923.40 895 H936.40 M932.80 891.1 L936.90 895 L932.80 898.9" stroke="#575a5f" stroke-width="2.1" stroke-linecap="round" stroke-linejoin="round" fill="none"/><path d="M984.88 895 H997.88 M994.28 891.1 L998.38 895 L994.28 898.9" stroke="#575a5f" stroke-width="2.1" stroke-linecap="round" stroke-linejoin="round" fill="none"/><path d="M1046.36 895 H1059.36 M1055.76 891.1 L1059.86 895 L1055.76 898.9" stroke="#575a5f" stroke-width="2.1" stroke-linecap="round" stroke-linejoin="round" fill="none"/><path d="M923.40 933 H936.40 M932.80 929.1 L936.90 933 L932.80 936.9" stroke="#575a5f" stroke-width="2.1" stroke-linecap="round" stroke-linejoin="round" fill="none"/><path d="M984.88 933 H997.88 M994.28 929.1 L998.38 933 L994.28 936.9" stroke="#575a5f" stroke-width="2.1" stroke-linecap="round" stroke-linejoin="round" fill="none"/><path d="M1046.36 933 H1059.36 M1055.76 929.1 L1059.86 933 L1055.76 936.9" stroke="#575a5f" stroke-width="2.1" stroke-linecap="round" stroke-linejoin="round" fill="none"/><path d="M923.40 971 H936.40 M932.80 967.1 L936.90 971 L932.80 974.9" stroke="#575a5f" stroke-width="2.1" stroke-linecap="round" stroke-linejoin="round" fill="none"/><path d="M984.88 971 H997.88 M994.28 967.1 L998.38 971 L994.28 974.9" stroke="#575a5f" stroke-width="2.1" stroke-linecap="round" stroke-linejoin="round" fill="none"/><path d="M923.40 1009 H936.40 M932.80 1005.1 L936.90 1009 L932.80 1012.9" stroke="#575a5f" stroke-width="2.1" stroke-linecap="round" stroke-linejoin="round" fill="none"/><path d="M923.40 1047 H936.40 M932.80 1043.1 L936.90 1047 L932.80 1050.9" stroke="#575a5f" stroke-width="2.1" stroke-linecap="round" stroke-linejoin="round" fill="none"/><path d="M923.40 1085 H936.40 M932.80 1081.1 L936.90 1085 L932.80 1088.9" stroke="#575a5f" stroke-width="2.1" stroke-linecap="round" stroke-linejoin="round" fill="none"/></svg><div class="r" style="left:786px;top:184px;width:2386px;height:996px;overflow:hidden;background:transparent"><div style="position:absolute;left:-786px;top:-184px"><div class="c" style="left:922.00px;top:162px;color:#ffd700">}</div><div class="c" style="left:922.00px;top:238px;color:#569cd6">func</div><div class="c" style="left:998.85px;top:238px;color:#ffd700">(</div><div class="c" style="left:1014.22px;top:238px;color:#9cdcfe">c</div><div class="c" style="left:1044.96px;top:238px;color:#d4d4d4">*</div><div class="c" style="left:1060.33px;top:238px;color:#4ec9b0">Counter</div><div class="c" style="left:1167.92px;top:238px;color:#ffd700">)</div><div class="c" style="left:1198.66px;top:238px;color:#dcdcaa">Increment</div><div class="c" style="left:1336.99px;top:238px;color:#ffd700">()</div><div class="c" style="left:1383.10px;top:238px;color:#ffd700">{</div><div class="c" style="left:983.48px;top:276px;color:#9cdcfe">c</div><div class="c" style="left:998.85px;top:276px;color:#d4d4d4">.</div><div class="c" style="left:1014.22px;top:276px;color:#9cdcfe">Count</div><div class="c" style="left:1091.07px;top:276px;color:#d4d4d4">++</div><div class="c" style="left:922.00px;top:314px;color:#ffd700">}</div><div class="c" style="left:922.00px;top:390px;color:#569cd6">var</div><div class="c" style="left:983.48px;top:390px;color:#9cdcfe">wg</div><div class="c" style="left:1029.59px;top:390px;color:#4ec9b0">sync</div><div class="c" style="left:1091.07px;top:390px;color:#d4d4d4">.</div><div class="c" style="left:1106.44px;top:390px;color:#4ec9b0">WaitGroup</div><div class="c" style="left:922.00px;top:466px;color:#569cd6">func</div><div class="c" style="left:998.85px;top:466px;color:#dcdcaa">main</div><div class="c" style="left:1060.33px;top:466px;color:#ffd700">()</div><div class="c" style="left:1106.44px;top:466px;color:#ffd700">{</div><div class="c" style="left:983.48px;top:504px;color:#9cdcfe">counter</div><div class="c" style="left:1106.44px;top:504px;color:#d4d4d4">:=</div><div class="c" style="left:1152.55px;top:504px;color:#4ec9b0">Counter</div><div class="c" style="left:1260.14px;top:504px;color:#da70d6">{</div><div class="c" style="left:1044.96px;top:542px;color:#9cdcfe">Count</div><div class="c" style="left:1121.81px;top:542px;color:#d4d4d4">:</div><div class="c" style="left:1152.55px;top:542px;color:#b5cea8">0</div><div class="c" style="left:1167.92px;top:542px;color:#d4d4d4">,</div><div class="c" style="left:983.48px;top:580px;color:#da70d6">}</div><div class="c" style="left:983.48px;top:618px;color:#9cdcfe">wg</div><div class="c" style="left:1014.22px;top:618px;color:#d4d4d4">.</div><div class="c" style="left:1029.59px;top:618px;color:#dcdcaa">Add</div><div class="c" style="left:1075.70px;top:618px;color:#da70d6">(</div><div class="c" style="left:1091.07px;top:618px;color:#b5cea8">10</div><div class="c" style="left:1121.81px;top:618px;color:#da70d6">)</div><div class="c" style="left:983.48px;top:656px;color:#c586c0">for</div><div class="c" style="left:1044.96px;top:656px;color:#9cdcfe">i</div><div class="c" style="left:1075.70px;top:656px;color:#d4d4d4">:=</div><div class="c" style="left:1121.81px;top:656px;color:#b5cea8">0</div><div class="c" style="left:1137.18px;top:656px;color:#d4d4d4">;</div><div class="c" style="left:1167.92px;top:656px;color:#9cdcfe">i</div><div class="c" style="left:1198.66px;top:656px;color:#d4d4d4">&lt;</div><div class="c" style="left:1229.40px;top:656px;color:#b5cea8">10</div><div class="c" style="left:1260.14px;top:656px;color:#d4d4d4">;</div><div class="c" style="left:1290.88px;top:656px;color:#9cdcfe">i</div><div class="c" style="left:1306.25px;top:656px;color:#d4d4d4">++</div><div class="c" style="left:1352.36px;top:656px;color:#da70d6">{</div><div class="c" style="left:1044.96px;top:694px;color:#c586c0">go</div><div class="c" style="left:1091.07px;top:694px;color:#569cd6">func</div><div class="c" style="left:1152.55px;top:694px;color:#179fff">()</div><div class="c" style="left:1198.66px;top:694px;color:#179fff">{</div><div class="c" style="left:1106.44px;top:732px;color:#c586c0">defer</div><div class="c" style="left:1198.66px;top:732px;color:#9cdcfe">wg</div><div class="c" style="left:1229.40px;top:732px;color:#d4d4d4">.</div><div class="c" style="left:1244.77px;top:732px;color:#dcdcaa">Done</div><div class="c" style="left:1306.25px;top:732px;color:#ffd700">()</div><div class="c" style="left:1106.44px;top:770px;color:#9cdcfe">counter</div><div class="c" style="left:1214.03px;top:770px;color:#d4d4d4">.</div><div class="c" style="left:1229.40px;top:770px;color:#dcdcaa">Lock</div><div class="c" style="left:1290.88px;top:770px;color:#ffd700">()</div><div class="c" style="left:1106.44px;top:808px;color:#c586c0">for</div><div class="c" style="left:1167.92px;top:808px;color:#9cdcfe">j</div><div class="c" style="left:1198.66px;top:808px;color:#d4d4d4">:=</div><div class="c" style="left:1244.77px;top:808px;color:#b5cea8">0</div><div class="c" style="left:1260.14px;top:808px;color:#d4d4d4">;</div><div class="c" style="left:1290.88px;top:808px;color:#9cdcfe">j</div><div class="c" style="left:1321.62px;top:808px;color:#d4d4d4">&lt;</div><div class="c" style="left:1352.36px;top:808px;color:#b5cea8">100000</div><div class="c" style="left:1444.58px;top:808px;color:#d4d4d4">;</div><div class="c" style="left:1475.32px;top:808px;color:#9cdcfe">j</div><div class="c" style="left:1490.69px;top:808px;color:#d4d4d4">++</div><div class="c" style="left:1536.80px;top:808px;color:#ffd700">{</div><div class="c" style="left:1167.92px;top:846px;color:#9cdcfe">counter</div><div class="c" style="left:1275.51px;top:846px;color:#d4d4d4">.</div><div class="c" style="left:1290.88px;top:846px;color:#dcdcaa">Increment</div><div class="c" style="left:1429.21px;top:846px;color:#da70d6">()</div><div class="c" style="left:1106.44px;top:884px;color:#ffd700">}</div><div class="c" style="left:1106.44px;top:922px;color:#9cdcfe">counter</div><div class="c" style="left:1214.03px;top:922px;color:#d4d4d4">.</div><div class="c" style="left:1229.40px;top:922px;color:#dcdcaa">Unlock</div><div class="c" style="left:1321.62px;top:922px;color:#ffd700">()</div><div class="c" style="left:1044.96px;top:960px;color:#179fff">}</div><div class="c" style="left:1060.33px;top:960px;color:#179fff">()</div><div class="c" style="left:983.48px;top:998px;color:#da70d6">}</div><div class="c" style="left:983.48px;top:1036px;color:#9cdcfe">wg</div><div class="c" style="left:1014.22px;top:1036px;color:#d4d4d4">.</div><div class="c" style="left:1029.59px;top:1036px;color:#dcdcaa">Wait</div><div class="c" style="left:1091.07px;top:1036px;color:#da70d6">()</div><div class="c" style="left:983.48px;top:1074px;color:#9cdcfe">fmt</div><div class="c" style="left:1029.59px;top:1074px;color:#d4d4d4">.</div><div class="c" style="left:1044.96px;top:1074px;color:#dcdcaa">Println</div><div class="c" style="left:1152.55px;top:1074px;color:#da70d6">(</div><div class="c" style="left:1167.92px;top:1074px;color:#9cdcfe">counter</div><div class="c" style="left:1275.51px;top:1074px;color:#d4d4d4">.</div><div class="c" style="left:1290.88px;top:1074px;color:#9cdcfe">Count</div><div class="c" style="left:1367.73px;top:1074px;color:#da70d6">)</div><div class="c" style="left:922.00px;top:1112px;color:#ffd700">}</div></div></div><div class="c" style="left:838.66px;top:200px;color:#6e7681">25</div><div class="c" style="left:838.66px;top:238px;color:#6e7681">24</div><div class="c" style="left:838.66px;top:276px;color:#6e7681">23</div><div class="c" style="left:838.66px;top:314px;color:#6e7681">22</div><div class="c" style="left:838.66px;top:352px;color:#6e7681">21</div><div class="c" style="left:838.66px;top:390px;color:#6e7681">20</div><div class="c" style="left:838.66px;top:428px;color:#6e7681">19</div><div class="c" style="left:838.66px;top:466px;color:#6e7681">18</div><div class="c" style="left:838.66px;top:504px;color:#6e7681">17</div><div class="c" style="left:838.66px;top:542px;color:#6e7681">16</div><div class="c" style="left:838.66px;top:580px;color:#6e7681">15</div><div class="c" style="left:838.66px;top:618px;color:#6e7681">14</div><div class="c" style="left:838.66px;top:656px;color:#6e7681">13</div><div class="c" style="left:838.66px;top:694px;color:#6e7681">12</div><div class="c" style="left:838.66px;top:732px;color:#6e7681">11</div><div class="c" style="left:838.66px;top:770px;color:#6e7681">10</div><div class="c" style="left:854.03px;top:808px;color:#6e7681">9</div><div class="c" style="left:854.03px;top:846px;color:#6e7681">8</div><div class="c" style="left:854.03px;top:884px;color:#6e7681">7</div><div class="c" style="left:854.03px;top:922px;color:#6e7681">6</div><div class="c" style="left:854.03px;top:960px;color:#6e7681">5</div><div class="c" style="left:854.03px;top:998px;color:#6e7681">4</div><div class="c" style="left:854.03px;top:1036px;color:#6e7681">3</div><div class="c" style="left:854.03px;top:1074px;color:#6e7681">2</div><div class="c" style="left:854.03px;top:1112px;color:#6e7681">1</div><div class="c" style="left:824px;top:1150px;color:#cccccc">37</div><div class="r" style="left:786px;top:184px;width:2146px;height:10px;background:transparent;background:linear-gradient(#000000a0,#00000030 40%,#00000000);"></div><div class="r" style="left:2940px;top:184px;width:232px;height:144px;background:#22364a;"></div><div class="r" style="left:2940px;top:184px;width:24px;height:4px;background:#264f78;"></div><div class="r" style="left:2940px;top:192px;width:16px;height:4px;background:#264f78;"></div><div class="r" style="left:2940px;top:196px;width:18px;height:4px;background:#264f78;"></div><div class="r" style="left:2940px;top:200px;width:20px;height:4px;background:#264f78;"></div><div class="r" style="left:2940px;top:204px;width:2px;height:4px;background:#264f78;"></div><div class="r" style="left:2940px;top:212px;width:42px;height:4px;background:#264f78;"></div><div class="r" style="left:2940px;top:216px;width:28px;height:4px;background:#264f78;"></div><div class="r" style="left:2940px;top:220px;width:26px;height:4px;background:#264f78;"></div><div class="r" style="left:2940px;top:224px;width:2px;height:4px;background:#264f78;"></div><div class="r" style="left:2940px;top:232px;width:62px;height:4px;background:#264f78;"></div><div class="r" style="left:2940px;top:236px;width:26px;height:4px;background:#264f78;"></div><div class="r" style="left:2940px;top:240px;width:2px;height:4px;background:#264f78;"></div><div class="r" style="left:2940px;top:248px;width:42px;height:4px;background:#264f78;"></div><div class="r" style="left:2940px;top:256px;width:26px;height:4px;background:#264f78;"></div><div class="r" style="left:2940px;top:260px;width:46px;height:4px;background:#264f78;"></div><div class="r" style="left:2940px;top:264px;width:34px;height:4px;background:#264f78;"></div><div class="r" style="left:2940px;top:268px;width:10px;height:4px;background:#264f78;"></div><div class="r" style="left:2940px;top:272px;width:28px;height:4px;background:#264f78;"></div><div class="r" style="left:2940px;top:276px;width:58px;height:4px;background:#264f78;"></div><div class="r" style="left:2940px;top:280px;width:38px;height:4px;background:#264f78;"></div><div class="r" style="left:2940px;top:284px;width:54px;height:4px;background:#264f78;"></div><div class="r" style="left:2940px;top:288px;width:52px;height:4px;background:#264f78;"></div><div class="r" style="left:2940px;top:292px;width:82px;height:4px;background:#264f78;"></div><div class="r" style="left:2940px;top:296px;width:70px;height:4px;background:#264f78;"></div><div class="r" style="left:2940px;top:300px;width:26px;height:4px;background:#264f78;"></div><div class="r" style="left:2940px;top:304px;width:56px;height:4px;background:#264f78;"></div><div class="r" style="left:2940px;top:308px;width:22px;height:4px;background:#264f78;"></div><div class="r" style="left:2940px;top:312px;width:10px;height:4px;background:#264f78;"></div><div class="r" style="left:2940px;top:316px;width:26px;height:4px;background:#264f78;"></div><div class="r" style="left:2940px;top:320px;width:60px;height:4px;background:#264f78;"></div><div class="r" style="left:2940px;top:324px;width:2px;height:4px;background:#264f78;"></div><div class="r" style="left:3172px;top:184px;width:1px;height:996px;background:#010409;"></div><div class="r" style="left:3172px;top:184px;width:28px;height:1px;background:#0d0d0d;"></div><div class="r" style="left:3173px;top:758px;width:27px;height:4px;background:#858585;"></div><div class="r" style="left:786px;top:1180px;width:2414px;height:2px;background:#2b2b2b;"></div><div class="r" style="left:786px;top:1182px;width:2414px;height:678px;background:#181818;"></div><div class="r" style="left:953px;top:1199px;width:36px;height:36px;background:#616161;border-radius:18px;"></div><div class="r" style="left:1379px;top:1238px;width:110px;height:2px;background:#0078d4;"></div><svg class="s" style="left:2656px;top:1201px;" width="32" height="32" viewBox="0 0 32 32" fill="none"><rect x="2.5" y="2.5" width="27" height="27" rx="2.5" stroke="#cccccc" stroke-width="2.2"/><path d="M8 10 L14 15.5 L8 21 M15 23 H23" stroke="#cccccc" stroke-width="2.2"/></svg><svg class="s" style="left:2851px;top:1200px;" width="32" height="32" viewBox="0 0 32 32" fill="none"><path d="M16 3 V29 M3 16 H29" stroke="#cccccc" stroke-width="2.2"/></svg><svg class="s" style="left:2888px;top:1204px;" width="24" height="24" viewBox="0 0 24 24" fill="none"><path d="M4 9 L12 17 L20 9" stroke="#cccccc" stroke-width="2"/></svg><svg class="s" style="left:2931px;top:1200px;" width="32" height="32" viewBox="0 0 32 32" fill="none"><rect x="3.5" y="3.5" width="25" height="25" rx="2.5" stroke="#cccccc" stroke-width="2.2"/><path d="M16 3.5 V28.5" stroke="#cccccc" stroke-width="2.2"/></svg><svg class="s" style="left:2981px;top:1200px;" width="32" height="32" viewBox="0 0 32 32" fill="none"><path d="M5 7 H27 M12 7 V3.5 H20 V7 M7.5 7 V27 Q7.5 29 9.5 29 H22.5 Q24.5 29 24.5 27 V7 M13 11 V25 M16 11 V25 M19 11 V25" stroke="#cccccc" stroke-width="2"/></svg><svg class="s" style="left:3030px;top:1202px;" width="40" height="30" viewBox="3030 1202 40 30" fill="none"><circle cx="3039.9" cy="1217" r="2.3" fill="#cccccc"/><circle cx="3050.0" cy="1217" r="2.3" fill="#cccccc"/><circle cx="3060.1" cy="1217" r="2.3" fill="#cccccc"/></svg><svg class="s" style="left:3086px;top:1200px;" width="32" height="32" viewBox="0 0 32 32" fill="none"><path d="M6 21.5 L16 11.5 L26 21.5" stroke="#cccccc" stroke-width="2.2"/></svg><svg class="s" style="left:3138px;top:1200px;" width="32" height="32" viewBox="0 0 32 32" fill="none"><path d="M7 7 L25 25 M25 7 L7 25" stroke="#cccccc" stroke-width="2.2"/></svg><svg class="s" style="left:790px;top:1285px;" width="30" height="100" viewBox="0 0 30 100" fill="none"><circle cx="18" cy="14" r="8" fill="#1b81a8"/><circle cx="18" cy="82" r="6.5" stroke="#5a5a5a" stroke-width="3"/></svg><svg class="s" style="left:826px;top:1287px;" width="30" height="26" viewBox="0 0 30 26" fill="none"><path d="M4.5 12.3 H23.5 M18.1 5.3 L25.2 12.3 L18.1 19.3" stroke="#23d18b" stroke-width="4.8" stroke-linecap="round" stroke-linejoin="round"/></svg><div class="c" style="left:871.70px;top:1288px;font-size:26.3px;line-height:26.3px;transform:scaleX(0.9442);color:#29b8db;font-weight:bold;">go_learn</div><div class="c" style="left:1005.80px;top:1288px;font-size:26.3px;line-height:26.3px;transform:scaleX(0.9442);color:#cccccc;">go run -race main.go</div><div class="c" style="left:827.00px;top:1322px;font-size:26.3px;line-height:26.3px;transform:scaleX(0.9442);color:#cccccc;">1000000</div><svg class="s" style="left:826px;top:1355px;" width="30" height="26" viewBox="0 0 30 26" fill="none"><path d="M4.5 12.3 H23.5 M18.1 5.3 L25.2 12.3 L18.1 19.3" stroke="#23d18b" stroke-width="4.8" stroke-linecap="round" stroke-linejoin="round"/></svg><div class="c" style="left:871.70px;top:1356px;font-size:26.3px;line-height:26.3px;transform:scaleX(0.9442);color:#29b8db;font-weight:bold;">go_learn</div><div class="r" style="left:1006px;top:1350px;width:15px;height:34px;background:#cccccc;"></div><div class="r" style="left:3172px;top:1282px;width:1px;height:578px;background:#010409;"></div><div class="r" style="left:3173px;top:1282px;width:9px;height:4px;background:#5a5a5a;"></div><div class="r" style="left:3173px;top:1294px;width:9px;height:18px;background:#1b81a8;"></div><div class="r" style="left:3173px;top:1420px;width:9px;height:12px;background:#1b81a8;"></div><div class="r" style="left:3173px;top:1539px;width:9px;height:12px;background:#1b81a8;"></div><div class="r" style="left:3173px;top:1687px;width:9px;height:12px;background:#1b81a8;"></div><div class="r" style="left:3173px;top:1726px;width:9px;height:12px;background:#1b81a8;"></div><div class="r" style="left:3173px;top:1775px;width:9px;height:15px;background:#4a9ec4;"></div><div class="r" style="left:3173px;top:1833px;width:9px;height:14px;background:#4a9ec4;"></div><div class="r" style="left:3191px;top:1282px;width:9px;height:16px;background:#f14c4c;"></div><div class="r" style="left:3191px;top:1659px;width:9px;height:16px;background:#f14c4c;"></div><div class="r" style="left:3191px;top:1683px;width:9px;height:12px;background:#f14c4c;"></div><div class="r" style="left:3191px;top:1700px;width:9px;height:13px;background:#f14c4c;"></div><div class="r" style="left:3191px;top:1721px;width:9px;height:12px;background:#f14c4c;"></div><div class="r" style="left:3191px;top:1739px;width:9px;height:17px;background:#f14c4c;"></div><div class="r" style="left:3191px;top:1765px;width:9px;height:14px;background:#f14c4c;"></div><div class="r" style="left:3191px;top:1781px;width:9px;height:12px;background:#f14c4c;"></div><div class="r" style="left:3191px;top:1802px;width:9px;height:12px;background:#f14c4c;"></div><div class="r" style="left:3173px;top:1821px;width:27px;height:39px;background:#79797966;"></div><div class="r" style="left:0px;top:1860px;width:3200px;height:44px;background:#181818;"></div><div class="r" style="left:0px;top:1860px;width:3200px;height:2px;background:#2b2b2b;"></div><div class="r" style="left:0px;top:1862px;width:181px;height:42px;background:#0078d4;"></div><svg class="s" style="left:20px;top:1866px;" width="30" height="34" viewBox="0 0 30 34" fill="none"><path d="M5.3 11.8 L13.5 19 L5.3 27 M22.8 4.2 L14.6 11.5 L22.8 19" stroke="#ffffff" stroke-width="2.2"/></svg><svg class="s" style="left:196px;top:1867px;" width="30" height="30" viewBox="0 0 30 30" fill="none"><circle cx="15" cy="15" r="11" stroke="#cccccc" stroke-width="2.2"/><path d="M10.5 10.5 L19.5 19.5 M19.5 10.5 L10.5 19.5" stroke="#cccccc" stroke-width="2.2"/></svg><svg class="s" style="left:251px;top:1866px;" width="30" height="30" viewBox="0 0 30 30" fill="none"><path d="M15 4 L27 26 H3 Z" stroke="#cccccc" stroke-width="2.2" stroke-linejoin="round"/><path d="M15 11 V19" stroke="#cccccc" stroke-width="2.4"/><circle cx="15" cy="22.5" r="1.4" fill="#cccccc"/></svg><svg class="s" style="left:330px;top:1864px;" width="32" height="34" viewBox="0 0 32 34" fill="none"><path d="M9 7 Q4 12 9 19 M23 7 Q28 12 23 19 M12.5 10 Q10.5 13 12.5 16 M19.5 10 Q21.5 13 19.5 16" stroke="#cccccc" stroke-width="2"/><circle cx="16" cy="13" r="2" fill="#cccccc"/><path d="M16 15 L10.5 30 M16 15 L21.5 30 M12.5 24.5 H19.5" stroke="#cccccc" stroke-width="2"/></svg><svg class="s" style="left:2632px;top:1868px;" width="30" height="30" viewBox="0 0 30 30" fill="none"><path d="M10 4.5 Q6.5 4.5 6.5 8 V12 Q6.5 15 4 15 Q6.5 15 6.5 18 V22 Q6.5 25.5 10 25.5 M20 4.5 Q23.5 4.5 23.5 8 V12 Q23.5 15 26 15 Q23.5 15 23.5 18 V22 Q23.5 25.5 20 25.5" stroke="#cccccc" stroke-width="2"/></svg><svg class="s" style="left:2797px;top:1868px;" width="22" height="30" viewBox="0 0 22 30" fill="none"><path d="M13.5 2.5 L5 14.5 H11 L8 25.5 L17.5 11.5 H11.5 L15 2.5 Z" stroke="#cccccc" stroke-width="1.8" stroke-linejoin="round"/></svg><svg class="s" style="left:2852px;top:1868px;" width="30" height="34" viewBox="0 0 30 34" fill="none"><path d="M9 22 Q3 17 3 12.5 Q3 3 13.5 3 Q24 3 24 12.5 Q24 17 18 22" stroke="#cccccc" stroke-width="2.2"/><path d="M10 16.5 Q8 14.5 8 12.5 Q8 7.5 13.5 7.5 Q19 7.5 19 12.5 Q19 14.5 17 16.5" stroke="#cccccc" stroke-width="2.2"/><circle cx="13.5" cy="12.5" r="2.2" fill="#cccccc"/><rect x="11.5" y="16" width="4" height="12" rx="1" fill="#cccccc"/></svg><svg class="s" style="left:2996px;top:1868px;" width="32" height="30" viewBox="0 0 32 30" fill="none"><circle cx="15" cy="15" r="11.5" stroke="#cccccc" stroke-width="2.2"/><path d="M7 23 L23 7" stroke="#cccccc" stroke-width="2.2"/></svg><svg class="s" style="left:3142px;top:1866px;" width="28" height="34" viewBox="0 0 28 34" fill="none"><path d="M4 23 H24 Q21 20 21 17 V12 Q21 5 14 5 Q7 5 7 12 V17 Q7 20 4 23 Z" stroke="#cccccc" stroke-width="2.2" stroke-linejoin="round"/><path d="M11 26 Q14 29 17 26" stroke="#cccccc" stroke-width="2.2"/></svg><div class="r" style="left:2688px;top:1495px;width:432px;height:72px;background:#272727;border:2px solid #3c3c3c;box-sizing:border-box;border-radius:14px;box-shadow:0 0 24px 8px rgba(0,0,0,0.45);"></div><div class="r" style="left:2690px;top:1497px;width:47px;height:68px;background:#1f1f1f;border-radius:12px 0 0 12px;"></div><div class="r" style="left:2736px;top:1497px;width:2px;height:68px;background:#3d3d3d;"></div><div class="r" style="left:2709px;top:1515px;width:6px;height:32px;background:#a0a0a0;border-radius:3px;"></div><svg class="s" style="left:2690px;top:1500px" width="430" height="64" viewBox="2690 1500 430 64"><path d="M2748.8 1519.5 H2787.1 M2761 1513.5 V1524.5 M2775.6 1513.5 V1524.5 M2754 1539 V1530 H2782 V1539 M2768 1524.5 V1539 M2748.8 1538.6 H2787.1 M2768 1539 Q2764 1548 2749.5 1551 M2768 1539 Q2772 1548 2786.6 1550.6" stroke="#ffffff" stroke-width="3" fill="none"/><path d="M2832 1512 A19 19 0 1 1 2815.7 1541.6 Q2829 1537 2833.5 1525 Q2835 1518 2832 1512 Z" stroke="#ffffff" stroke-width="2.6" fill="none" stroke-linejoin="round"/><circle cx="2887.2" cy="1522" r="5.8" fill="#ffffff"/><path d="M2900 1531.6 H2909 L2904.4 1545.6 H2898.4 Z" fill="#ffffff"/><path d="M2950.5 1513.5 L2941.5 1525 M2946 1518 H2959 M2947 1522.5 L2951.5 1528 M2965 1513.5 L2959 1522 M2962 1518 H2979 M2965.5 1522.5 L2970 1525 M2945 1529 V1552.6 M2951 1529 H2978.5 V1549 Q2978.5 1552 2975 1552 H2972 M2955.5 1534 H2969.5 V1548 H2955.5 Z M2955.5 1541 H2969.5" stroke="#ffffff" stroke-width="3" fill="none"/><circle cx="3024" cy="1531" r="19" stroke="#ffffff" stroke-width="2.6" fill="none"/><circle cx="3017" cy="1525.5" r="2.5" fill="#ffffff"/><circle cx="3031" cy="1525.5" r="2.5" fill="#ffffff"/><path d="M3014 1538 Q3024 1545 3034 1538" stroke="#ffffff" stroke-width="2.6" fill="none"/><path d="M3100.95 1525.68 L3106.55 1526.87 L3106.55 1535.13 L3100.95 1536.32 L3100.92 1536.40 L3104.03 1541.19 L3098.19 1547.03 L3093.40 1543.92 L3093.32 1543.95 L3092.13 1549.55 L3083.87 1549.55 L3082.68 1543.95 L3082.60 1543.92 L3077.81 1547.03 L3071.97 1541.19 L3075.08 1536.40 L3075.05 1536.32 L3069.45 1535.13 L3069.45 1526.87 L3075.05 1525.68 L3075.08 1525.60 L3071.97 1520.81 L3077.81 1514.97 L3082.60 1518.08 L3082.68 1518.05 L3083.87 1512.45 L3092.13 1512.45 L3093.32 1518.05 L3093.40 1518.08 L3098.19 1514.97 L3104.03 1520.81 L3100.92 1525.60Z" stroke="#ffffff" stroke-width="2.6" stroke-linejoin="round" fill="none"/><circle cx="3088" cy="1531" r="6" stroke="#ffffff" stroke-width="2.6" fill="none"/></svg>
<div class="t" style="left:85.19px;top:22px;font-size:26px;line-height:26px;color:#cccccc;transform:scaleX(0.9538);transform-origin:0 0;">File</div>
<div class="t" style="left:156.75px;top:22px;font-size:26px;line-height:26px;color:#cccccc;transform:scaleX(0.9767);transform-origin:0 0;">Edit</div>
<div class="t" style="left:232.00px;top:22px;font-size:26px;line-height:26px;color:#cccccc;letter-spacing:-0.21px;">Selection</div>
<div class="t" style="left:368.90px;top:22px;font-size:26px;line-height:26px;color:#cccccc;transform:scaleX(0.9732);transform-origin:0 0;">View</div>
<div class="t" style="left:455.02px;top:22px;font-size:26px;line-height:26px;color:#cccccc;transform:scaleX(0.9758);transform-origin:0 0;">Go</div>
<div class="t" style="left:519.20px;top:22px;font-size:26px;line-height:26px;color:#cccccc;">Run</div>
<div class="t" style="left:598.20px;top:22px;font-size:26px;line-height:26px;color:#cccccc;letter-spacing:-0.24px;">Terminal</div>
<div class="t" style="left:724.42px;top:22px;font-size:26px;line-height:26px;color:#cccccc;transform:scaleX(1.0392);transform-origin:0 0;">Help</div>
<div class="t" style="left:1570.03px;top:25px;font-size:24px;line-height:24px;color:#cccccc;transform:scaleX(0.9719);transform-origin:0 0;">go_learn [WSL: Arch]</div>
<div class="t" style="left:135.46px;top:96px;font-size:22px;line-height:22px;color:#cccccc;transform:scaleX(0.8449);transform-origin:0 0;">EXPLORER</div>
<div class="t" style="left:135.06px;top:153px;font-size:22px;line-height:22px;color:#cccccc;font-weight:bold;transform:scaleX(0.9436);transform-origin:0 0;">GO_LEARN [WSL: ARCH]</div>
<div class="t" style="left:207.56px;top:193px;font-size:26px;line-height:26px;color:#cca700;transform:scaleX(1.0440);transform-origin:0 0;">go.mod</div>
<div class="t" style="left:739.00px;top:195px;font-size:24px;line-height:24px;color:#cca700;">2</div>
<div class="t" style="left:207.60px;top:237px;font-size:26px;line-height:26px;color:#cccccc;">go.sum</div>
<div class="t" style="left:208.30px;top:281px;font-size:26px;line-height:26px;color:#cccccc;letter-spacing:-0.05px;">main.go</div>
<div class="t" style="left:135.33px;top:1742px;font-size:22px;line-height:22px;color:#cccccc;font-weight:bold;transform:scaleX(0.9695);transform-origin:0 0;">OUTLINE</div>
<div class="t" style="left:136.30px;top:1786px;font-size:22px;line-height:22px;color:#cccccc;font-weight:bold;transform:scaleX(0.9755);transform-origin:0 0;">TIMELINE</div>
<div class="t" style="left:135.33px;top:1830px;font-size:22px;line-height:22px;color:#cccccc;font-weight:bold;transform:scaleX(0.9727);transform-origin:0 0;">GO</div>
<div class="t" style="left:849.60px;top:93px;font-size:26px;line-height:26px;color:#ffffff;letter-spacing:0.07px;">main.go</div>
<div class="t" style="left:861.60px;top:150px;font-size:26px;line-height:26px;color:#a9a9a9;letter-spacing:0.23px;">main.go</div>
<div class="t" style="left:826.12px;top:1208px;font-size:22px;line-height:22px;color:#9d9d9d;transform:scaleX(0.8760);transform-origin:0 0;">PROBLEMS</div>
<div class="t" style="left:963.50px;top:1208px;font-size:22px;line-height:22px;color:#ffffff;">2</div>
<div class="t" style="left:1033.09px;top:1208px;font-size:22px;line-height:22px;color:#9d9d9d;transform:scaleX(0.9056);transform-origin:0 0;">OUTPUT</div>
<div class="t" style="left:1163.10px;top:1208px;font-size:22px;line-height:22px;color:#9d9d9d;transform:scaleX(0.8984);transform-origin:0 0;">DEBUG CONSOLE</div>
<div class="t" style="left:1383.00px;top:1208px;font-size:22px;line-height:22px;color:#e7e7e7;transform:scaleX(0.9225);transform-origin:0 0;">TERMINAL</div>
<div class="t" style="left:1533.67px;top:1208px;font-size:22px;line-height:22px;color:#9d9d9d;transform:scaleX(0.8311);transform-origin:0 0;">PORTS</div>
<div class="t" style="left:2695.10px;top:1205px;font-size:24px;line-height:24px;color:#cccccc;transform:scaleX(0.9000);transform-origin:0 0;">zsh - go_learn</div>
<div class="t" style="left:54.50px;top:1872px;font-size:24px;line-height:24px;color:#ffffff;transform:scaleX(0.9420);transform-origin:0 0;">WSL: Arch</div>
<div class="t" style="left:231.00px;top:1872px;font-size:24px;line-height:24px;color:#cccccc;">0</div>
<div class="t" style="left:286.00px;top:1872px;font-size:24px;line-height:24px;color:#cccccc;">2</div>
<div class="t" style="left:364.00px;top:1872px;font-size:24px;line-height:24px;color:#cccccc;">0</div>
<div class="t" style="left:2034.87px;top:1872px;font-size:24px;line-height:24px;color:#cccccc;transform:scaleX(0.9667);transform-origin:0 0;">Ln 37, Col 1 (430 selected)</div>
<div class="t" style="left:2346.00px;top:1872px;font-size:24px;line-height:24px;color:#cccccc;transform:scaleX(0.9076);transform-origin:0 0;">Tab Size: 4</div>
<div class="t" style="left:2484.81px;top:1872px;font-size:24px;line-height:24px;color:#cccccc;transform:scaleX(0.9439);transform-origin:0 0;">UTF-8</div>
<div class="t" style="left:2579.87px;top:1872px;font-size:24px;line-height:24px;color:#cccccc;transform:scaleX(0.9160);transform-origin:0 0;">LF</div>
<div class="t" style="left:2672.48px;top:1872px;font-size:24px;line-height:24px;color:#cccccc;transform:scaleX(0.9226);transform-origin:0 0;">Go</div>
<div class="t" style="left:2732.63px;top:1872px;font-size:24px;line-height:24px;color:#cccccc;transform:scaleX(0.8692);transform-origin:0 0;">1.23.1</div>
<div class="t" style="left:2887.75px;top:1872px;font-size:24px;line-height:24px;color:#cccccc;transform:scaleX(0.9506);transform-origin:0 0;">Go Live</div>
<div class="t" style="left:3032.00px;top:1872px;font-size:24px;line-height:24px;color:#cccccc;letter-spacing:0.14px;">Prettier</div>
</body></html>
